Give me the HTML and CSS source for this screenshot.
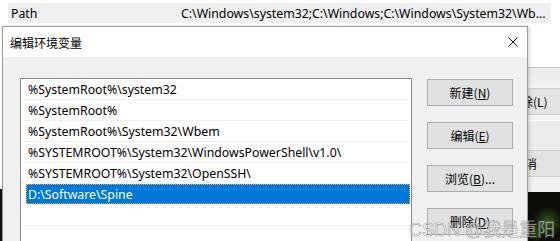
FILE: index.html
```html
<!DOCTYPE html>
<html lang="zh-CN">
<head>
    <meta charset="UTF-8">
    <title>编辑环境变量</title>
    <link rel="stylesheet" href="styles.css">
</head>
<body>
    <!-- Window behind the dialog -->
    <div class="bg-row">
        <span class="bg-name">Path</span>
        <span class="bg-value">C:\Windows\system32;C:\Windows;C:\Windows\System32\Wb...</span>
    </div>

    <div class="stage">
        <div class="left-edge">
            <div class="edge-light"></div>
            <div class="edge-dark"></div>
        </div>

        <div class="dialog" role="dialog" aria-label="编辑环境变量">
            <div class="titlebar">
                <span class="title">编辑环境变量</span>
                <svg class="close" width="10" height="10" viewBox="0 0 10 10">
                    <path d="M0.5 0.5 L9.5 9.5 M9.5 0.5 L0.5 9.5" stroke="#1a1a1a" stroke-width="1" fill="none"/>
                </svg>
            </div>

            <div class="dialog-body">
                <ul class="list">
                    <li><span>%SystemRoot%\system32</span></li>
                    <li><span>%SystemRoot%</span></li>
                    <li><span>%SystemRoot%\System32\Wbem</span></li>
                    <li><span>%SYSTEMROOT%\System32\WindowsPowerShell\v1.0\</span></li>
                    <li><span>%SYSTEMROOT%\System32\OpenSSH\</span></li>
                    <li class="selected"><span>D:\Software\Spine</span></li>
                    <li><span></span></li>
                </ul>

                <div class="buttons">
                    <button class="btn">新建(<u>N</u>)</button>
                    <button class="btn">编辑(<u>E</u>)</button>
                    <button class="btn">浏览(<u>B</u>)...</button>
                    <button class="btn">删除(<u>D</u>)</button>
                </div>
            </div>
        </div>

        <div class="right-strip">
            <div class="strip-white"></div>
            <div class="strip-shade"></div>
            <div class="strip-btn"><span class="cut-l">除(L)</span></div>
            <div class="strip-gap"></div>
            <div class="strip-btn"><span class="cut-x">消</span></div>
            <div class="strip-gap2"></div>
            <div class="strip-photo"></div>
        </div>
    </div>

    <!-- Watermark over the screenshot -->
    <div class="watermark">CSDN @我是重阳</div>
</body>
</html>
```

FILE: styles.css
```css
/* Global Styles */
body {
    margin: 0;
    width: 560px;
    height: 241px;
    overflow: hidden;
    background: #fff;
    font-family: "Noto Sans", "Noto Sans CJK SC", sans-serif;
    font-size: 12.3px;
    color: #000;
    position: relative;
}

/* Background window row */
.bg-row {
    margin: 3px 0 0 8px;
    width: 543px;
    height: 20px;
    background: #efefef;
    display: flex;
    align-items: center;
    white-space: nowrap;
    overflow: hidden;
}

.bg-name {
    width: 170px;
    flex-shrink: 0;
    padding-left: 3px;
}

.stage {
    margin-top: 3px;
    height: 215px;
    display: flex;
}

.left-edge {
    width: 2px;
    display: flex;
    flex-direction: column;
}

.edge-light {
    height: 163px;
    background: #fff;
}

.edge-dark {
    flex: 1;
    background: #111;
}

/* Dialog */
.dialog {
    width: 524px;
    border: 1px solid #9a9a9a;
    border-bottom: none;
    background: #f0f0f0;
    display: flex;
    flex-direction: column;
    box-shadow: 2px 0 3px rgba(0, 0, 0, 0.15);
    z-index: 1;
}

.titlebar {
    height: 30px;
    background: #fff;
    display: flex;
    align-items: center;
    justify-content: space-between;
    padding: 0 9px 0 7px;
}

.title {
    font-family: "Noto Sans CJK SC", sans-serif;
    font-size: 12px;
}

.dialog-body {
    flex: 1;
    display: flex;
    gap: 15px;
    padding: 21px 0 0 17px;
    overflow: hidden;
}

.list {
    list-style: none;
    margin: 0;
    padding: 0;
    width: 390px;
    border: 1px solid #828790;
    border-bottom: none;
    background: #fff;
}

.list li {
    height: 20px;
    border-bottom: 1px solid #f0f0f0;
    display: flex;
}

.list li span {
    flex: 1;
    margin: 0 1px 0 5px;
    padding: 1px 0 0 2px;
    line-height: 20px;
    white-space: nowrap;
}

.list li.selected span {
    background: #0078d7;
    color: #fff;
    outline: 1px dotted #f0a040;
    outline-offset: -1px;
}

.buttons {
    display: flex;
    flex-direction: column;
    gap: 16px;
    padding-top: 1px;
}

.btn {
    width: 86px;
    height: 27px;
    background: #e1e1e1;
    border: 1px solid #adadad;
    font-family: "Noto Sans CJK SC", sans-serif;
    font-size: 12px;
    color: #000;
    padding: 0;
}

.btn u {
    text-underline-offset: 1px;
}

/* Window to the right of the dialog */
.right-strip {
    flex: 1;
    display: flex;
    flex-direction: column;
    white-space: nowrap;
    overflow: hidden;
}

.strip-white {
    height: 41px;
    background: #fff;
    border-bottom: 1px solid #c8c8c8;
}

.strip-shade {
    height: 20px;
    background: linear-gradient(to bottom, #ececec, #f2f2f2);
}

.strip-btn {
    height: 25px;
    background: #e3e3e3;
    border-top: 1px solid #cfcfcf;
    border-bottom: 1px solid #cfcfcf;
    display: flex;
    align-items: center;
    font-family: "Noto Sans CJK SC", sans-serif;
    font-size: 12px;
}

.cut-l {
    margin-left: -7px;
}

.cut-x {
    margin-left: -3px;
}

.strip-gap {
    height: 35px;
    background: linear-gradient(to bottom, #f4f4f4 0, #f4f4f4 5px, #fff 5px, #fff 6px, #ececec 6px);
}

.strip-gap2 {
    height: 15px;
    background: #f0f0f0;
}

.strip-photo {
    flex: 1;
    background:
        radial-gradient(circle at 20px 30px, #3a5a20 0, rgba(40, 70, 20, 0.6) 8px, transparent 16px),
        radial-gradient(circle at 8px 40px, #2d4a18 0, transparent 10px),
        #0b0d08;
}

/* Watermark */
.watermark {
    position: absolute;
    left: 409px;
    top: 215px;
    font-family: "Liberation Sans", "Noto Sans CJK SC", sans-serif;
    font-size: 18px;
    color: rgba(255, 255, 255, 0.55);
    -webkit-text-stroke: 0.6px rgba(90, 90, 90, 0.55);
    white-space: nowrap;
    z-index: 2;
}
```
